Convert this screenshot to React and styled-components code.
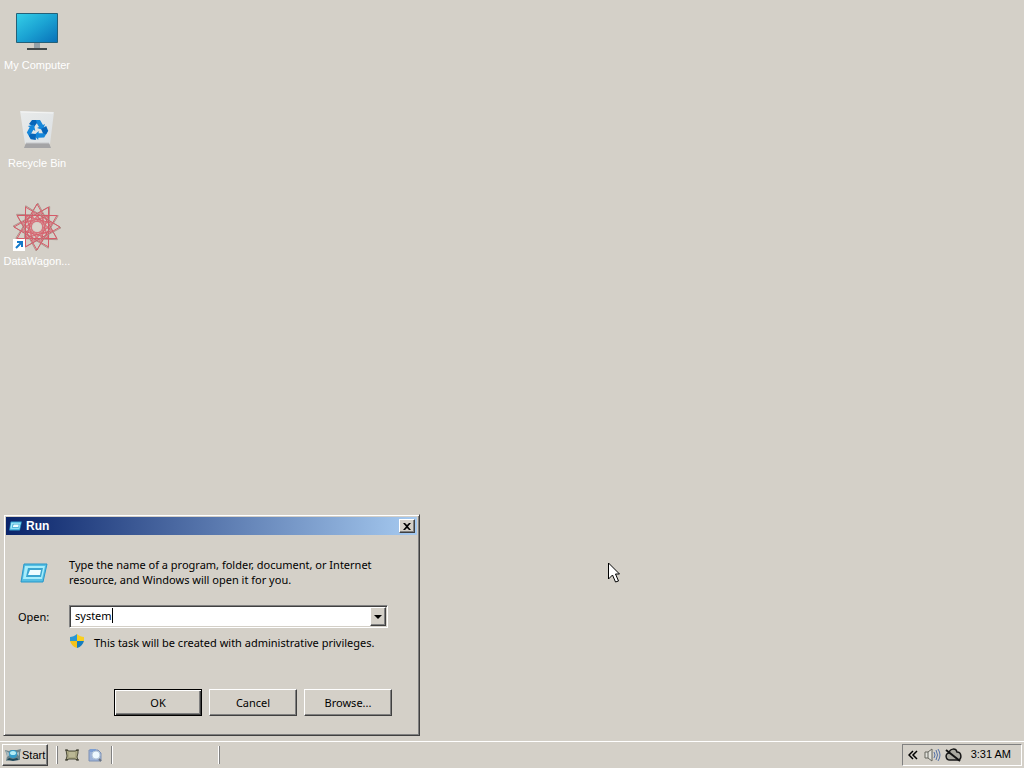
import React, { useState } from "react";
import styled, { createGlobalStyle, css } from "styled-components";

const FACE = "#d4d0c8";
const SHADOW = "#808080";
const DARK = "#404040";
const CLASSIC = '"Liberation Sans", Arial, sans-serif';
const MODERN = '"Noto Sans", "Open Sans", sans-serif';

const GlobalStyle = createGlobalStyle`
  * { box-sizing: border-box; }
  body {
    margin: 0;
    overflow: hidden;
    background: ${FACE};
    color: #000;
    font: 11px/14px ${CLASSIC};
  }
  button, input { font: inherit; color: inherit; }
`;

const raised = css`
  border: 1px solid;
  border-color: #fff ${DARK} ${DARK} #fff;
  box-shadow: inset -1px -1px 0 ${SHADOW};
`;

const Screen = styled.div`
  display: flex;
  flex-direction: column;
  height: 100vh;
  cursor: default;
`;

const Desktop = styled.main`
  position: relative;
  flex: 1;
  min-height: 0;
`;

const IconColumn = styled.nav`
  display: flex;
  flex-direction: column;
  width: 74px;
  padding-top: 7px;
`;

const DesktopIcon = styled.a`
  display: flex;
  flex-direction: column;
  align-items: center;
  gap: 3px;
  height: 98px;
  color: #fff;
  text-decoration: none;
  white-space: nowrap;
`;

const RunWindow = styled.section`
  position: absolute;
  left: 3px;
  bottom: 4px;
  width: 417px;
  padding: 2px;
  background: ${FACE};
  border: 1px solid;
  border-color: ${FACE} ${DARK} ${DARK} ${FACE};
  box-shadow: inset 1px 1px 0 #fff, inset -1px -1px 0 ${SHADOW};
`;

const TitleBar = styled.header`
  display: flex;
  align-items: center;
  gap: 4px;
  height: 18px;
  padding: 0 2px 0 3px;
  color: #fff;
  background: linear-gradient(to right, #0a246a, #a6caf0);
`;

const Title = styled.h1`
  flex: 1;
  margin: 0;
  font: bold 12px/14px ${CLASSIC};
`;

const CloseButton = styled.button`
  display: flex;
  align-items: center;
  justify-content: center;
  width: 16px;
  height: 14px;
  padding: 0;
  background: ${FACE};
  ${raised}
`;

const RunForm = styled.form`
  display: grid;
  grid-template-columns: 51px 1fr;
  padding: 22px 29px 17px 12px;
  font: 11px/15px ${MODERN};
`;

const RunIconCell = styled.div`
  padding: 6px 0 0 2px;
`;

const Message = styled.p`
  margin: 0;
`;

const OpenLabel = styled.label`
  align-self: center;
  margin-top: 18px;
`;

const ComboBox = styled.div`
  display: flex;
  height: 23px;
  margin-top: 18px;
  padding: 1px;
  background: #fff;
  border: 1px solid;
  border-color: ${SHADOW} #fff #fff ${SHADOW};
  box-shadow: inset 1px 1px 0 ${DARK}, inset -1px -1px 0 ${FACE};
`;

const ComboText = styled.div`
  display: flex;
  flex: 1;
  align-items: center;
  min-width: 0;
  padding: 0 0 2px 4px;
`;

const ComboInput = styled.input`
  field-sizing: content;
  min-width: 1px;
  max-width: 100%;
  padding: 0;
  border: 0;
  outline: 0;
  background: transparent;
  caret-color: transparent;
`;

const Caret = styled.span`
  width: 1px;
  height: 15px;
  background: #000;
`;

const ComboArrow = styled.button`
  display: flex;
  align-items: center;
  justify-content: center;
  width: 16px;
  padding: 0;
  background: ${FACE};
  ${raised}
`;

const Privilege = styled.div`
  grid-column: 2;
  display: flex;
  align-items: center;
  gap: 9px;
  margin-top: 6px;
  white-space: nowrap;
`;

const Actions = styled.div`
  grid-column: 1 / -1;
  display: flex;
  justify-content: flex-end;
  gap: 7px;
  margin: 39px -4px 0 0;
`;

const ActionButton = styled.button`
  width: 88px;
  height: 27px;
  padding: 0;
  background: ${FACE};
  ${raised}
  ${({ $primary }) =>
    $primary &&
    css`
      border-color: #000;
      box-shadow: inset 1px 1px 0 #fff, inset -1px -1px 0 ${DARK}, inset -2px -2px 0 ${SHADOW};
    `}
`;

const Pointer = styled.svg`
  position: absolute;
  left: 608px;
  top: 562px;
`;

const Taskbar = styled.footer`
  display: flex;
  align-items: center;
  height: 28px;
  padding: 2px 2px 1px;
  background: ${FACE};
  border-top: 1px solid ${FACE};
  box-shadow: inset 0 1px 0 #fff;
`;

const StartButton = styled.button`
  display: flex;
  align-items: center;
  gap: 1px;
  width: 46px;
  height: 22px;
  padding: 0 0 0 2px;
  background: ${FACE};
  ${raised}
`;

const Grip = styled.span`
  width: 2px;
  height: 18px;
  margin: 0 0 0 ${({ $before }) => $before}px;
  border-left: 1px solid ${({ $light }) => ($light ? "#fff" : SHADOW)};
  border-right: 1px solid ${({ $light }) => ($light ? SHADOW : "#fff")};
`;

const QuickLaunch = styled.div`
  display: flex;
  gap: 7px;
  margin-left: 6px;
`;

const QuickButton = styled.button`
  display: flex;
  padding: 0;
  border: 0;
  background: transparent;
`;

const Tray = styled.div`
  display: flex;
  align-items: center;
  gap: 4px;
  height: 22px;
  margin-left: auto;
  padding: 0 10px 0 5px;
  border: 1px solid;
  border-color: ${SHADOW} #fff #fff ${SHADOW};
`;

const Clock = styled.time`
  margin: 0 0 2px 5px;
`;

function MonitorIcon() {
  return (
    <svg width="48" height="48" viewBox="0 0 48 48" aria-hidden="true">
      <defs>
        <linearGradient id="screen" x1="0" y1="0" x2="1" y2="1">
          <stop offset="0" stopColor="#35cfe8" />
          <stop offset=".5" stopColor="#1ba3d3" />
          <stop offset="1" stopColor="#0870b8" />
        </linearGradient>
      </defs>
      <path d="M21 35h6v7h-6z" fill="#96a1a7" />
      <path d="M14 41h20v2H14z" fill="#43494a" />
      <path d="M3.500 6.500h41v29h-41z" fill="url(#screen)" stroke="#246078" />
    </svg>
  );
}

function RecycleIcon() {
  return (
    <svg width="48" height="48" viewBox="0 0 48 48" aria-hidden="true">
      <defs>
        <linearGradient id="bin" x1="0" y1="0" x2="1" y2="1">
          <stop offset="0" stopColor="#e9ebeb" />
          <stop offset="1" stopColor="#dce0e3" />
        </linearGradient>
      </defs>
      <path d="M7 6l34 1-4 32H12z" fill="url(#bin)" />
      <path d="M8 7l32 1" stroke="#f5f5f4" />
      <path d="M13 38h23l2 5H11z" fill="#a4a4a6" />
      <path d="M13 38h23" stroke="#c6c8cb" />
      {[0, 120, 240].map((a) => (
        <g key={a} transform={`rotate(${a} 24 25)`}>
          <path d="M19 15h8l3 5 2-1-2 6-6-2 2-1-3-5z" fill="#1687da" />
          <path d="M19 15h4l1 3-3 4-5-3z" fill="#0765b9" />
        </g>
      ))}
    </svg>
  );
}

function point(radius, degrees) {
  const angle = (degrees * Math.PI) / 180;
  return `${(25 + radius * Math.sin(angle)).toFixed(1)},${(24 - radius * Math.cos(angle)).toFixed(1)}`;
}

function triangle(radius, turn) {
  return [0, 120, 240].map((step) => point(radius, step + turn)).join(" ");
}

function DataWagonIcon() {
  return (
    <svg width="50" height="48" viewBox="0 0 50 48" fill="none" aria-hidden="true">
      {[0, 30, 60, 90].map((turn) => (
        <g key={turn}>
          <polygon points={triangle(24, turn + 2)} stroke="#b08f89" />
          <polygon points={triangle(23, turn)} stroke="#d65a68" />
          <polygon points={triangle(15, turn + 15)} stroke="#d5606c" />
          <polygon points={triangle(11, turn + 5)} stroke="#d8717a" />
        </g>
      ))}
      <circle cx="25" cy="24" r="4" fill="#dcd3ca" />
      <path d="M1 36h12v12H1z" fill="#fff" />
      <path d="M4 45l6-6M5 39h5v5" stroke="#1379c9" strokeWidth="2" />
    </svg>
  );
}

function RunIcon({ width, height }) {
  return (
    <svg width={width} height={height} viewBox="0 0 28 20" aria-hidden="true">
      <path d="M4 1h23l-4 18H1z" fill="#55bee3" stroke="#2797c9" />
      <path d="M5 3h20l-3 13H3z" fill="#a7edfb" />
      <path d="M8 5h15l-2 9H6z" fill="#3ba5d0" />
      <path d="M10 7h11l-1 5H8z" fill="#eefcff" />
    </svg>
  );
}

function ShieldIcon() {
  return (
    <svg width="16" height="16" viewBox="0 0 16 16" aria-hidden="true">
      <path d="M8 0C6 2 3 3 1 3v4h7z" fill="#2997d4" />
      <path d="M8 0c2 2 5 3 7 3v4H8z" fill="#f9cf20" />
      <path d="M1 7h7v7C4 13 2 10 1 7z" fill="#f4c21b" />
      <path d="M8 7h7c-1 3-3 6-7 7z" fill="#167dbd" />
    </svg>
  );
}

function StartIcon() {
  return (
    <svg width="16" height="14" viewBox="0 0 16 14" aria-hidden="true">
      <path d="M0 2l4 1 2-1h6l4-1-1 4v7l-4-1-6 1-4 1 1-5z" fill="#6c848c" />
      <path d="M1 3l5 3-4 3zM11 5l3-1v4z" fill="#a8bac0" />
      <circle cx="8" cy="6" r="4" fill="#359dcb" />
      <ellipse cx="8" cy="5" rx="3" ry="2" fill="#b5edf7" />
      <path d="M4 10l4 1 4-1 2 2-6 1-6-1z" fill="#1f485b" />
    </svg>
  );
}

function DesktopShortcutIcon() {
  return (
    <svg width="16" height="16" viewBox="0 0 16 16" aria-hidden="true">
      <path d="M2 3l3 1h6l3-1v3l-1 4 1 3-3-1H5l-3 1 1-4z" fill="#aaa783" stroke="#4c4c3a" />
      <path d="M5 5h6v5H5z" fill="#bbb895" />
      <path d="M1 3h3M12 3h3M1 13h3M12 13h3" stroke="#343429" />
    </svg>
  );
}

function SearchShortcutIcon() {
  return (
    <svg width="16" height="16" viewBox="0 0 16 16" aria-hidden="true">
      <path d="M2 3h9l3 3v8H2z" fill="#9cb3d8" stroke="#7e91b4" />
      <path d="M3 2h6v3H3z" fill="#7d9fd2" />
      <circle cx="9" cy="8" r="4" fill="#edf9ff" stroke="#b6c8d8" />
      <path d="M12 12l2 2" stroke="#6b7380" strokeWidth="2" />
    </svg>
  );
}

function SpeakerIcon() {
  return (
    <svg width="17" height="16" viewBox="0 0 17 16" fill="none" aria-hidden="true">
      <path d="M1 5h3l4-3v12l-4-3H1z" fill="#e2e2dc" stroke="#66665f" />
      <path d="M4 5v6" stroke="#66665f" />
      <path d="M10 5q2 3 0 6M12 3q3 5 0 10M14 2q4 6 0 12" stroke="#5573a8" />
    </svg>
  );
}

function OfflineIcon() {
  return (
    <svg width="17" height="14" viewBox="0 0 17 14" fill="none" aria-hidden="true">
      <path d="M5 12C0 12 0 5 4 5c1-5 7-5 8-1 5 0 5 8 1 8z" fill="#aaa9a0" stroke="#171717" strokeWidth="1.500" />
      <path d="M1 2l14 11" stroke="#111" strokeWidth="2" />
    </svg>
  );
}

export default function App() {
  const [command, setCommand] = useState("system");

  return (
    <Screen>
      <GlobalStyle />
      <Desktop>
        <IconColumn aria-label="Desktop">
          <DesktopIcon href="#computer"><MonitorIcon />My Computer</DesktopIcon>
          <DesktopIcon href="#recycle"><RecycleIcon />Recycle Bin</DesktopIcon>
          <DesktopIcon href="#datawagon"><DataWagonIcon />DataWagon...</DesktopIcon>
        </IconColumn>

        <RunWindow role="dialog" aria-labelledby="run-title">
          <TitleBar>
            <RunIcon width={13} height={10} />
            <Title id="run-title">Run</Title>
            <CloseButton type="button" aria-label="Close">
              <svg width="8" height="7" viewBox="0 0 8 7" aria-hidden="true">
                <path d="M0 0h2l2 2 2-2h2L5 3.500 8 7H6L4 5 2 7H0l3-3.500z" />
              </svg>
            </CloseButton>
          </TitleBar>
          <RunForm onSubmit={(event) => event.preventDefault()}>
            <RunIconCell><RunIcon width={28} height={20} /></RunIconCell>
            <Message>
              Type the name of a program, folder, document, or Internet resource, and Windows will open it for you.
            </Message>
            <OpenLabel htmlFor="command">Open:</OpenLabel>
            <ComboBox>
              <ComboText>
                <ComboInput
                  id="command"
                  autoFocus
                  autoComplete="off"
                  spellCheck={false}
                  value={command}
                  onChange={(event) => setCommand(event.target.value)}
                />
                <Caret />
              </ComboText>
              <ComboArrow type="button" aria-label="Show recent commands">
                <svg width="8" height="4" viewBox="0 0 8 4" aria-hidden="true"><path d="M0 0h8L4 4z" /></svg>
              </ComboArrow>
            </ComboBox>
            <Privilege><ShieldIcon />This task will be created with administrative privileges.</Privilege>
            <Actions>
              <ActionButton type="submit" $primary>OK</ActionButton>
              <ActionButton type="button">Cancel</ActionButton>
              <ActionButton type="button">Browse...</ActionButton>
            </Actions>
          </RunForm>
        </RunWindow>

        <Pointer width="13" height="22" viewBox="0 0 13 22" aria-hidden="true">
          <path d="M.5 1v16l4-4 3 7 3-1-3-7h4z" fill="#fff" stroke="#000" />
        </Pointer>
      </Desktop>

      <Taskbar>
        <StartButton type="button"><StartIcon />Start</StartButton>
        <Grip $before={8} $light />
        <QuickLaunch>
          <QuickButton type="button" aria-label="Show desktop"><DesktopShortcutIcon /></QuickButton>
          <QuickButton type="button" aria-label="Search"><SearchShortcutIcon /></QuickButton>
        </QuickLaunch>
        <Grip $before={8} />
        <Grip $before={105} $light />
        <Tray>
          <svg width="12" height="10" viewBox="0 0 12 10" fill="none" aria-hidden="true">
            <path d="M5 1L1 5l4 4M9 1L5 5l4 4" stroke="#000" strokeWidth="1.500" />
          </svg>
          <SpeakerIcon />
          <OfflineIcon />
          <Clock>3:31 AM</Clock>
        </Tray>
      </Taskbar>
    </Screen>
  );
}
